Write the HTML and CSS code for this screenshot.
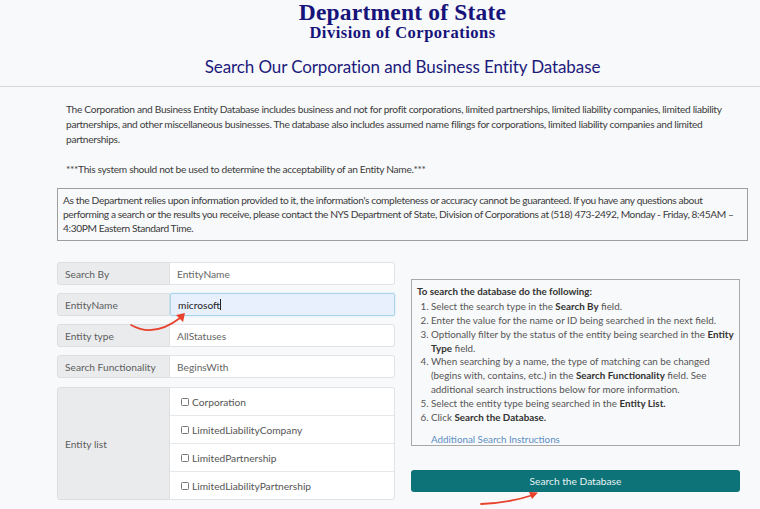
FILE: index.html
```html
<!DOCTYPE html>
<html>
<head>
<meta charset="utf-8">
<link rel="stylesheet" href="styles.css">
</head>
<body>
<header class="header">
  <div class="dept">Department of State</div>
  <div class="division">Division of Corporations</div>
  <h1 class="title">Search Our Corporation and Business Entity Database</h1>
</header>
<main class="main">
  <p class="intro">The Corporation and Business Entity Database includes business and not for profit corporations, limited partnerships, limited liability companies, limited liability partnerships, and other miscellaneous businesses. The database also includes assumed name filings for corporations, limited liability companies and limited partnerships.</p>
  <p class="intro warn">***This system should not be used to determine the acceptability of an Entity Name.***</p>
  <div class="notice">As the Department relies upon information provided to it, the information's completeness or accuracy cannot be guaranteed. If you have any questions about performing a search or the results you receive, please contact the NYS Department of State, Division of Corporations at (518) 473-2492, Monday - Friday, 8:45AM – 4:30PM Eastern Standard Time.</div>

  <div class="search">
    <div class="form">
      <div class="row"><div class="label">Search By</div><div class="field">EntityName</div></div>
      <div class="row"><div class="label">EntityName</div><div class="field focus">microsoft<span class="caret"></span></div></div>
      <div class="row"><div class="label">Entity type</div><div class="field">AllStatuses</div></div>
      <div class="row"><div class="label">Search Functionality</div><div class="field">BeginsWith</div></div>
      <div class="row list">
        <div class="label">Entity list</div>
        <div class="checks">
          <label class="check"><span class="box"></span>Corporation</label>
          <label class="check"><span class="box"></span>LimitedLiabilityCompany</label>
          <label class="check"><span class="box"></span>LimitedPartnership</label>
          <label class="check"><span class="box"></span>LimitedLiabilityPartnership</label>
        </div>
      </div>
      <svg class="arrow arrow1" width="60" height="24" viewBox="0 0 60 24"><path d="M1 13 Q24 26 50 6" fill="none" stroke="#e8412c" stroke-width="1.6" stroke-linecap="round"/><path d="M46 3 L55 1 L53 10 Z" fill="#e8412c"/></svg>
    </div>
    <div class="side">
      <div class="help">
        <div class="help-title">To search the database do the following:</div>
        <ol class="steps">
          <li>Select the search type in the <b>Search By</b> field.</li>
          <li>Enter the value for the name or ID being searched in the next field.</li>
          <li>Optionally filter by the status of the entity being searched in the <b>Entity Type</b> field.</li>
          <li>When searching by a name, the type of matching can be changed (begins with, contains, etc.) in the <b>Search Functionality</b> field. See additional search instructions below for more information.</li>
          <li>Select the entity type being searched in the <b>Entity List.</b></li>
          <li>Click <b>Search the Database.</b></li>
        </ol>
        <a class="more">Additional Search Instructions</a>
      </div>
      <button class="btn">Search the Database</button>
      <svg class="arrow2" width="64" height="16" viewBox="0 0 64 16"><path d="M2 12 Q30 11 54 3" fill="none" stroke="#e8412c" stroke-width="1.8" stroke-linecap="round"/><path d="M50 0 L59 0.5 L53 7 Z" fill="#e8412c"/></svg>
    </div>
  </div>
</main>
</body>
</html>
```
FILE: styles.css
```css
* { box-sizing: border-box; }
body {
  margin: 0;
  background: #f8f9fa;
  font-family: Lato, "Open Sans", sans-serif;
  color: #3a3a3a;
}
.header {
  text-align: center;
  color: #16137a;
  border-bottom: 1px solid #d6d6d6;
  height: 87px;
  padding-left: 45px;
}
.dept {
  font-family: "Liberation Serif", serif;
  font-weight: bold;
  font-size: 23.5px;
  line-height: 24px;
  letter-spacing: 0.2px;
}
.division {
  font-family: "Liberation Serif", serif;
  font-weight: bold;
  font-size: 16.5px;
  line-height: 17px;
  letter-spacing: 0.5px;
}
.title {
  margin: 0;
  padding-top: 16px;
  font-weight: normal;
  font-size: 17px;
  line-height: 20px;
  color: #1c1a7c;
  font-family: Lato, sans-serif;
  letter-spacing: -0.1px;
}
.main {
  padding: 0 12px 0 57px;
}
.intro {
  margin: 0;
  padding: 15px 9px 0 9px;
  font-size: 10.2px;
  line-height: 15px;
  letter-spacing: -0.32px;
  color: #3c3c3c;
}
.warn {
  padding-top: 15px;
  padding-bottom: 11px;
}
.notice {
  border: 1.5px solid #9e9e9e;
  padding: 4px 5px 5px 5px;
  font-size: 10.2px;
  line-height: 14px;
  letter-spacing: -0.38px;
  color: #3c3c3c;
  width: 691px;
}
.search {
  display: flex;
  gap: 16px;
  margin-top: 21px;
}
.form {
  width: 338px;
  display: flex;
  flex-direction: column;
  gap: 8px;
  position: relative;
}
.row {
  display: flex;
  height: 23px;
  border-radius: 3px;
}
.label {
  width: 113px;
  background: #e9ebed;
  border: 1px solid #dcdfe2;
  border-radius: 3px 0 0 3px;
  font-size: 10.2px;
  color: #5e5e5e;
  padding-left: 7px;
  display: flex;
  align-items: center;
}
.field {
  flex: 1;
  background: #fff;
  border: 1px solid #e1e3e5;
  border-left: none;
  border-radius: 0 3px 3px 0;
  font-size: 10.2px;
  color: #666;
  padding-left: 7px;
  display: flex;
  align-items: center;
}
.field.focus {
  background: #e8f0fe;
  border: 1.5px solid #a9d4ea;
  border-radius: 2px;
  color: #222;
  box-shadow: 0 0 2px #bfe3f2;
}
.caret {
  display: inline-block;
  width: 1px;
  height: 11px;
  background: #222;
}
.row.list {
  height: 113px;
  margin-top: 1px;
}
.checks {
  flex: 1;
  background: #fff;
  border: 1px solid #e1e3e5;
  border-left: none;
  border-radius: 0 3px 3px 0;
  display: flex;
  flex-direction: column;
}
.check {
  flex: 1;
  display: flex;
  align-items: center;
  font-size: 10.2px;
  color: #555;
  padding-left: 11px;
  border-bottom: 1px solid #e6e8ea;
}
.check:last-child { border-bottom: none; }
.box {
  width: 8px;
  height: 8px;
  border: 1px solid #777;
  border-radius: 1.5px;
  margin-right: 3px;
  background: #fff;
}
.side {
  width: 329px;
  position: relative;
  padding-top: 17px;
}
.help {
  border: 1.5px solid #a8a8a8;
  padding: 5px 5px 0 5px;
  height: 167px;
  font-size: 9.8px;
  line-height: 13.8px;
  color: #555;
}
.help-title {
  font-weight: bold;
  color: #333;
}
.help b { color: #333; }
.steps {
  margin: 1.5px 0 0 0;
  padding-left: 14px;
}
.more {
  display: block;
  color: #5b8ec4;
  padding-left: 14px;
  margin-top: 9px;
}
.btn {
  display: block;
  width: 329px;
  height: 22px;
  margin-top: 24px;
  background: #0d7378;
  color: #e8f4f5;
  border: none;
  border-radius: 3px;
  font-family: Lato, sans-serif;
  font-size: 10.2px;
}
.arrow { position: absolute; }
.arrow1 { left: 73px; top: 50px; }
.arrow2 { display: block; margin: 0 0 0 68px; }
```
